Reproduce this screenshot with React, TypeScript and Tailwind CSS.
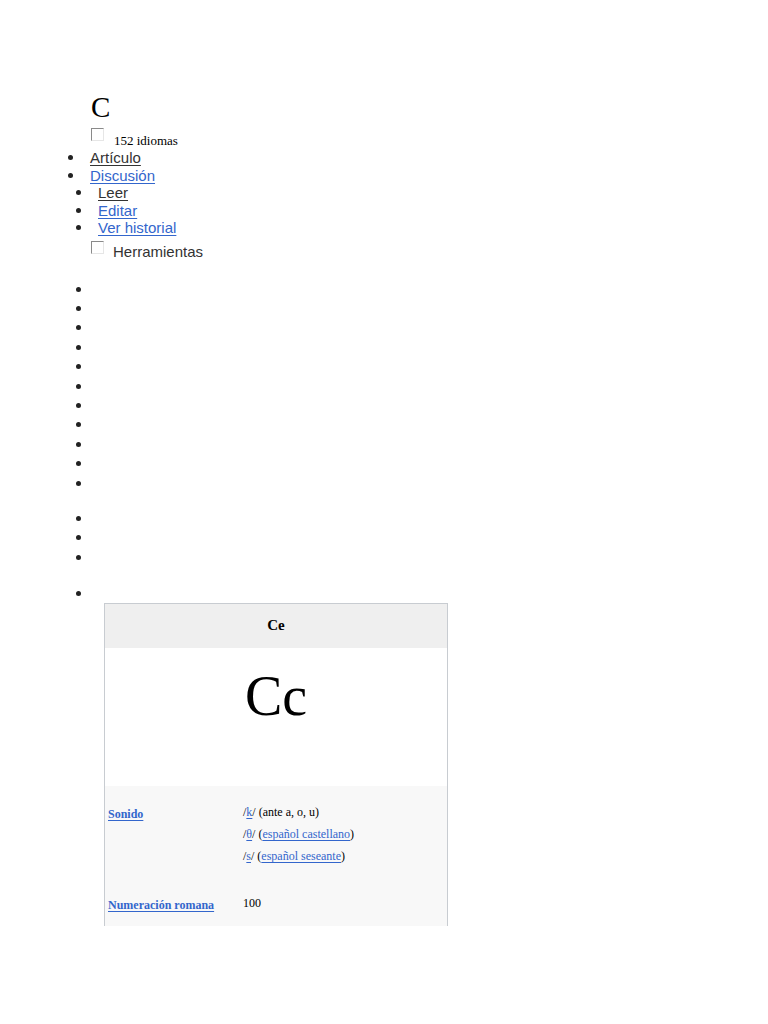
import React from "react";

const serif = "font-['Liberation_Serif','Times_New_Roman',serif]";
const sans = "font-['Liberation_Sans',Arial,sans-serif]";

function Bullet({ x }: { x: number }) {
  return (
    <span
      className={
        "block w-[5px] h-[5px] rounded-full bg-[#222] shrink-0 " +
        (x === 68 ? "ml-[68px]" : "ml-[76px]")
      }
    />
  );
}

function Checkbox() {
  return (
    <span className="block w-[13px] h-[13px] border-t border-l border-[#8a8a8a] border-r border-b border-r-[#e6e6e6] border-b-[#e6e6e6] bg-white shrink-0" />
  );
}

function EmptyBullet() {
  return (
    <div className="h-[19.4px] flex items-center">
      <Bullet x={76} />
    </div>
  );
}

export default function App() {
  const link = "text-[#3366cc] underline decoration-[1px] underline-offset-[2px]";
  return (
    <div className={"bg-white w-[768px] min-h-[1024px] text-[#202122] " + serif}>
      <div className="h-[91px]" />
      <h1 className="pl-[91px] text-[29px] leading-[32px] h-[32px] text-black">C</h1>
      <div className="h-[26px] flex items-start pl-[91px] pt-[5px]">
        <Checkbox />
        <span className="ml-[10px] text-[13px] leading-[15px] mt-[5px] text-black">152 idiomas</span>
      </div>
      <div className={sans + " text-[15px]"}>
        <div className="h-[17.5px] flex items-center">
          <Bullet x={68} />
          <a className="ml-[17px] leading-[17.5px] text-[#333] underline decoration-[1px] underline-offset-[2px]">Artículo</a>
        </div>
        <div className="h-[17.5px] flex items-center">
          <Bullet x={68} />
          <a className={"ml-[17px] leading-[17.5px] " + link}>Discusión</a>
        </div>
        <div className="h-[17.5px] flex items-center">
          <Bullet x={76} />
          <a className="ml-[17px] leading-[17.5px] text-[#333] underline decoration-[1px] underline-offset-[2px]">Leer</a>
        </div>
        <div className="h-[17.5px] flex items-center">
          <Bullet x={76} />
          <a className={"ml-[17px] leading-[17.5px] " + link}>Editar</a>
        </div>
        <div className="h-[17.5px] flex items-center">
          <Bullet x={76} />
          <a className={"ml-[17px] leading-[17.5px] " + link}>Ver historial</a>
        </div>
        <div className="mt-[5.5px] h-[17.5px] flex items-start pl-[91px]">
          <span className="mt-[-1px]">
            <Checkbox />
          </span>
          <span className="ml-[9px] mt-[1px] leading-[17.5px] text-[#333]">Herramientas</span>
        </div>
      </div>

      <div className="mt-[20px]">
        {Array.from({ length: 11 }).map((_, i) => (
          <EmptyBullet key={"a" + i} />
        ))}
      </div>
      <div className="mt-[16px]">
        {Array.from({ length: 3 }).map((_, i) => (
          <EmptyBullet key={"b" + i} />
        ))}
      </div>
      <div className="mt-[17px]">
        <EmptyBullet />
      </div>

      <div className="ml-[104px] w-[344px] h-[323px] overflow-hidden">
        <div className="border border-[#c8ccd1] bg-[#f8f8f8]">
          <div className="h-[44px] bg-[#efefef] flex items-center justify-center font-bold text-[15px] text-black">
            <span className="mt-[-2px]">Ce</span>
          </div>
          <div className="h-[138px] bg-white flex justify-center pt-[16px]">
            <span className="text-[56px] leading-[64px] text-black">Cc</span>
          </div>
          <div className="flex text-[12px] text-black">
            <div className="w-[138px] pl-[3px] pt-[19px]">
              <a className={"font-bold " + link}>Sonido</a>
            </div>
            <div className="pt-[19px] flex flex-col">
              <div className="leading-[14px] h-[22px]">
                /<a className={link}>k</a>/ (ante a, o, u)
              </div>
              <div className="leading-[14px] h-[22px]">
                /<a className={link}>θ</a>/ (<a className={link}>español castellano</a>)
              </div>
              <div className="leading-[14px] h-[22px]">
                /<a className={link}>s</a>/ (<a className={link}>español seseante</a>)
              </div>
            </div>
          </div>
          <div className="flex text-[12px] text-black pt-[25px] pb-[40px]">
            <div className="w-[138px] pl-[3px]">
              <a className={"font-bold leading-[14px] " + link}>Numeración romana</a>
            </div>
            <div className="leading-[14px]">100</div>
          </div>
        </div>
      </div>
    </div>
  );
}
